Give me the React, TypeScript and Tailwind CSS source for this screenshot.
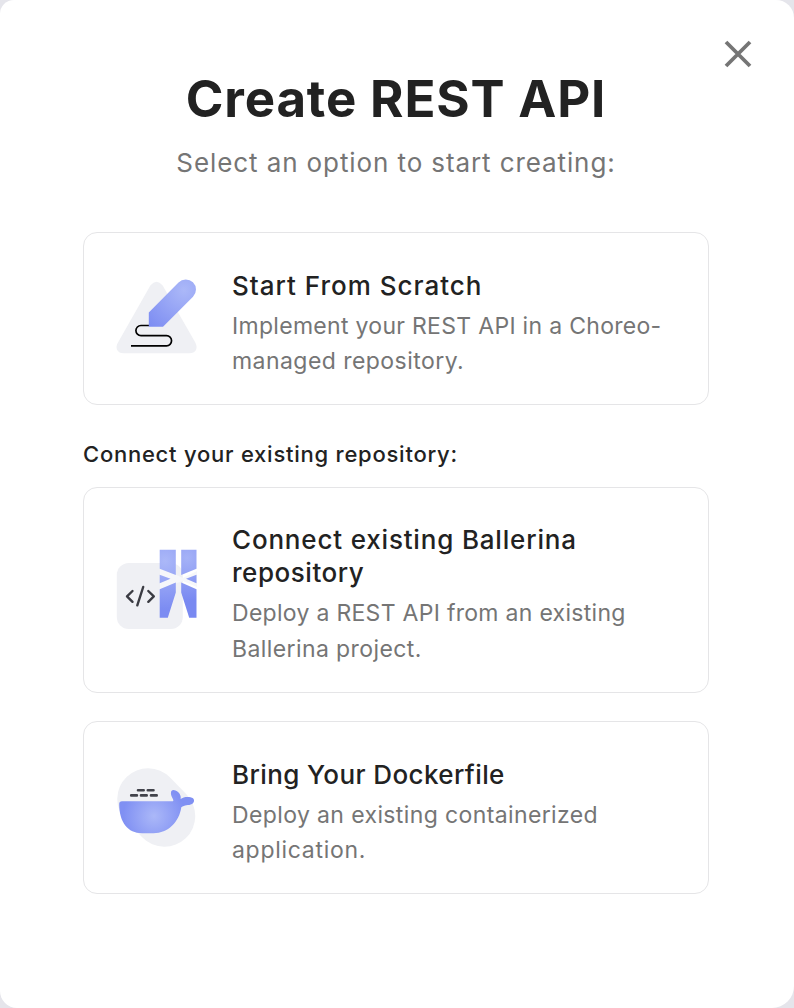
import type { ReactNode } from "react";

function ScratchIcon() {
  return (
    <svg className="-mt-[8px]" width="110" height="100" viewBox="0 0 110 100" fill="none">
      <defs>
        <radialGradient id="pen" cx="84" cy="25" r="50" gradientUnits="userSpaceOnUse">
          <stop stopColor="#abb8f8" />
          <stop offset="1" stopColor="#7c8cf2" />
        </radialGradient>
      </defs>
      <path d="M50.5 20.2Q56.5 13.2 62.5 20.2L95.3 77.5C98.5 83.5 95.5 88.3 89.5 88.3H23.5C17.5 88.3 14.5 83 18 77.5Z" fill="#eff0f4" />
      <path d="M49 60.5H41A5.1 5.1 0 0 0 41 70.7H66.5A5 5 0 0 1 66.5 80.8H31" stroke="#000" strokeWidth="1.7" />
      <path d="M48.8 47.5L78.5 17.4A10.2 10.2 0 0 1 93 31.8L63 61.8H48.8Z" fill="url(#pen)" />
    </svg>
  );
}

function BallerinaIcon() {
  return (
    <svg width="110" height="100" viewBox="0 0 110 100" fill="none">
      <defs>
        <radialGradient id="balLeft" cx="65" cy="21" r="48" gradientUnits="userSpaceOnUse">
          <stop stopColor="#abb8f8" />
          <stop offset="1" stopColor="#7c8cf2" />
        </radialGradient>
        <radialGradient id="balRight" cx="87" cy="18" r="43" gradientUnits="userSpaceOnUse">
          <stop stopColor="#a5b2f7" />
          <stop offset="1" stopColor="#7989f1" />
        </radialGradient>
      </defs>
      <rect x="16.8" y="23" width="66" height="66" rx="12" fill="#eff0f4" />
      <path d="M60 27L82.8 38L97 31V47L82.8 41L60 49Z" fill="#f6f7fa" />
      <path d="M32.5 51L27 56.3L32.5 61.8M48.3 51L53.8 56.3L48.3 61.8M43.2 47L37.3 65.3" stroke="#3b3c43" strokeWidth="2.4" strokeLinecap="round" strokeLinejoin="round" />
      <path d="M59.7 9.8H75.8V35L59.7 28.8ZM59.7 34.7L70.5 38.8L59.7 43.2ZM59.7 49.2L75.8 42.6V52.5L67.8 77.8H59.7Z" fill="url(#balLeft)" />
      <path d="M81.2 9.8H96.5V28.8L81.2 35ZM96.5 34.7L86 38.8L96.5 43.2ZM81.2 42.6L96.5 49.2V77.8H89.2L81.2 52.5Z" fill="url(#balRight)" />
    </svg>
  );
}

function DockerIcon() {
  return (
    <svg className="-mt-[6px]" width="110" height="100" viewBox="0 0 110 100" fill="none">
      <defs>
        <radialGradient id="whale" cx="54" cy="61" r="31" gradientUnits="userSpaceOnUse">
          <stop stopColor="#abb8f8" />
          <stop offset="1" stopColor="#8090f3" />
        </radialGradient>
      </defs>
      <path d="M48 44L64.5 61" stroke="#eff0f4" strokeWidth="61.5" strokeLinecap="round" />
      <path d="M19.2 49Q19.2 46.2 22 46.2H73C74.5 45 71 42 70.9 38.2C70.8 34.8 73.5 34.6 75.5 35.6C80 37.5 81.3 41.5 80.6 44C83 42 87 41.6 90.5 42.2C95 43 95 47 92 48.9C88.5 50.7 84.5 49.5 81.3 52.2C79.2 67 68 78.2 53.5 78.2H42C28 78.2 19.2 67.5 19.2 49Z" fill="url(#whale)" />
      <path d="M38 35.3H43.7M47.8 35.3H53.5M31.2 40.4H36.9M41 40.4H46.7M51 40.4H56.7" stroke="#42434b" strokeWidth="2.6" strokeLinecap="round" />
    </svg>
  );
}

interface OptionCardProps {
  icon: ReactNode;
  title: ReactNode;
  description: ReactNode;
  className: string;
  textClassName: string;
}

function OptionCard({ icon, title, description, className, textClassName }: OptionCardProps) {
  return (
    <button type="button" className={`flex w-[626px] items-center rounded-[14px] border border-[#e5e5e7] pl-4 text-left ${className}`}>
      <span className="mr-[22px] shrink-0">{icon}</span>
      <span className={`flex flex-col whitespace-nowrap ${textClassName}`}>
        <span className="text-[26px] leading-[33px] font-medium text-[#222]">{title}</span>
        <span className="mt-[7px] text-[23px] leading-[35.5px] font-normal text-[#757575]">{description}</span>
      </span>
    </button>
  );
}

export default function App() {
  return (
    <div className="h-[1008px] w-[794px] bg-[#e5e5eb]">
      <main className="relative flex h-full w-full flex-col rounded-tl-[14px] rounded-tr-[18px] rounded-br-[22px] rounded-bl-[17px] bg-white pl-[83px] font-['Inter',sans-serif]">
        <button type="button" aria-label="Close" className="absolute top-[40px] right-[42px]">
          <svg width="28" height="28" viewBox="0 0 28 28" fill="none">
            <path d="M2 2L26 26M26 2L2 26" stroke="#757575" strokeWidth="3.8" />
          </svg>
        </button>
        <header className="flex w-[626px] flex-col items-center whitespace-nowrap">
          <h1 className="mt-[68px] text-[51px] leading-[61px] font-bold tracking-[0.85px] text-[#222]">Create REST API</h1>
          <p className="mt-[18px] text-[26px] leading-[32px] font-normal tracking-[0.9px] text-[#757575]">Select an option to start creating:</p>
        </header>
        <OptionCard
          className="mt-[53px] h-[173px]"
          textClassName="pt-[11px]"
          icon={<ScratchIcon />}
          title={<span className="tracking-[1px]">Start From Scratch</span>}
          description={<><span className="tracking-[0.3px]">Implement your REST API in a Choreo-</span><br /><span className="tracking-[0.45px]">managed repository.</span></>}
        />
        <h2 className="mt-[34px] text-[22px] leading-[30px] font-medium tracking-[0.76px] text-[#222]">Connect your existing repository:</h2>
        <OptionCard
          className="mt-[18px] h-[206px]"
          textClassName="pt-[10px]"
          icon={<BallerinaIcon />}
          title={<><span className="tracking-[0.82px]">Connect existing Ballerina</span><br /><span className="tracking-[0.55px]">repository</span></>}
          description={<><span className="tracking-[0.29px]">Deploy a REST API from an existing</span><br /><span className="tracking-[0.4px]">Ballerina project.</span></>}
        />
        <OptionCard
          className="mt-[28px] h-[173px]"
          textClassName="pt-[11px]"
          icon={<DockerIcon />}
          title={<span className="tracking-[0.4px]">Bring Your Dockerfile</span>}
          description={<><span className="tracking-[0.38px]">Deploy an existing containerized</span><br /><span className="tracking-[0.7px]">application.</span></>}
        />
      </main>
    </div>
  );
}
